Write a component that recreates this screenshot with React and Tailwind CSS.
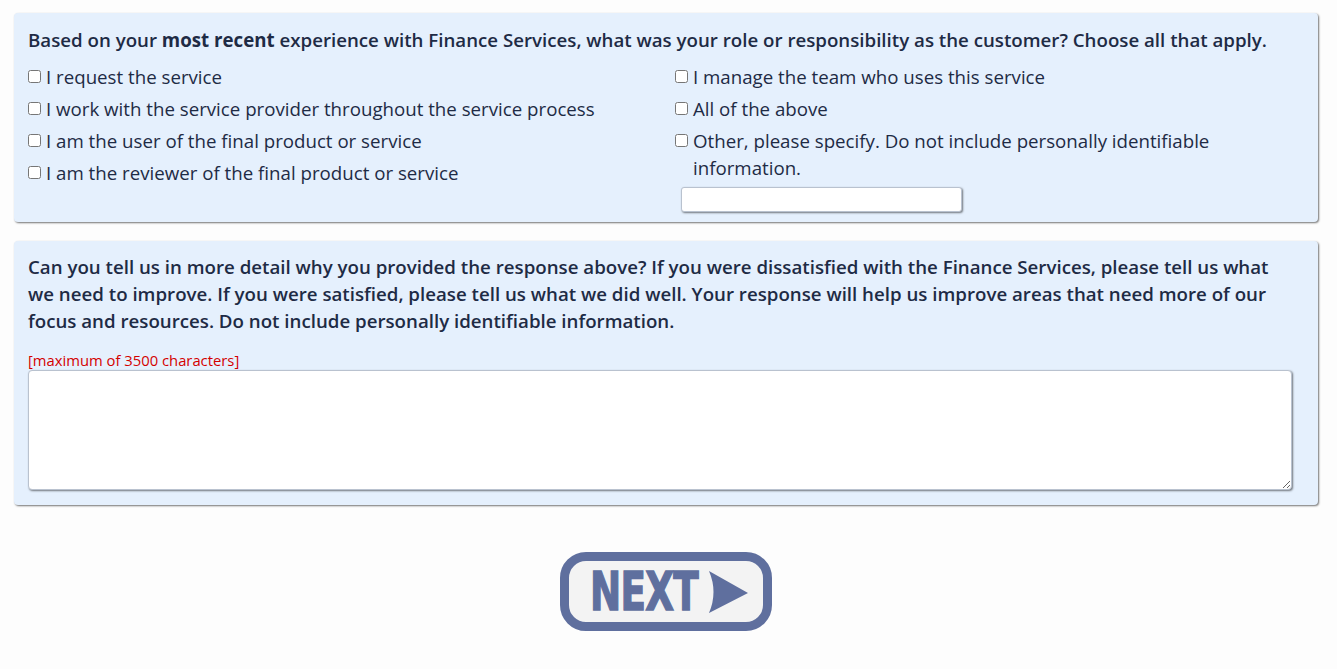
import { useState } from 'react';

const leftOptions = [
  'I request the service',
  'I work with the service provider throughout the service process',
  'I am the user of the final product or service',
  'I am the reviewer of the final product or service',
];

const rightOptions = [
  'I manage the team who uses this service',
  'All of the above',
  'Other, please specify. Do not include personally identifiable information.',
];

function Option({ label }) {
  return (
    <label className="flex items-start gap-[5px] leading-[27px]">
      <input type="checkbox" className="mt-[7px] h-[13px] w-[13px] shrink-0" />
      <span>{label}</span>
    </label>
  );
}

const App = () => {
  const [other, setOther] = useState('');
  const [detail, setDetail] = useState('');

  return (
    <div className="min-h-screen bg-[#fdfdfd] px-[14px] pt-[13px] text-[#1e2b45] font-['Open_Sans',sans-serif]">
      <div className="mr-[5px] rounded-[4px] bg-[#e5f0fd] px-[14px] pt-[14px] pb-[10px] shadow-[1px_1px_2px_rgba(0,0,0,0.55)]">
        <h2 className="text-[18.7px] font-semibold leading-[26px]">
          Based on your <span className="font-bold">most recent</span> experience with Finance Services, what was your role or responsibility as the customer? Choose all that apply.
        </h2>
        <div className="mt-[10px] grid grid-cols-[647px_1fr] text-[18.7px]">
          <div className="flex flex-col gap-[5px]">
            {leftOptions.map((o) => (
              <Option key={o} label={o} />
            ))}
          </div>
          <div className="flex flex-col gap-[5px] pr-[60px]">
            {rightOptions.map((o) => (
              <Option key={o} label={o} />
            ))}
            <input
              type="text"
              value={other}
              onChange={(e) => setOther(e.target.value)}
              className="ml-[6px] mt-[1px] h-[25px] w-[281px] rounded-[3px] border border-[#b9c2cf] bg-white shadow-[1px_1px_2px_rgba(0,0,0,0.5)]"
            />
          </div>
        </div>
      </div>

      <div className="mt-[19px] mr-[5px] rounded-[4px] bg-[#e5f0fd] px-[14px] pt-[12px] pb-[15px] shadow-[1px_1px_2px_rgba(0,0,0,0.55)]">
        <h2 className="pr-[24px] text-[18.7px] font-semibold leading-[27px]">
          Can you tell us in more detail why you provided the response above? If you were dissatisfied with the Finance Services, please tell us what we need to improve. If you were satisfied, please tell us what we did well. Your response will help us improve areas that need more of our focus and resources. Do not include personally identifiable information.
        </h2>
        <div className="mt-[17px] text-[14.8px] leading-[18px] text-[#d40000]">[maximum of 3500 characters]</div>
        <textarea
          value={detail}
          onChange={(e) => setDetail(e.target.value)}
          className="mt-[1px] block h-[120px] w-[1264px] rounded-[4px] border border-[#b9c2cf] bg-white shadow-[1px_1px_2px_rgba(0,0,0,0.5)]"
        />
      </div>

      <div className="flex justify-center pt-[47px] pr-[5px]">
        <button className="flex h-[79px] w-[212px] items-center rounded-[26px] border-[9px] border-[#5f6f9e] bg-[#f3f3f3] pl-[21px]">
          <span className="inline-block w-[107px] overflow-visible whitespace-nowrap">
            <span className="inline-block origin-left scale-x-[0.69] font-['DejaVu_Sans',sans-serif] text-[54px] font-bold leading-none tracking-[-1px] text-[#5f6f9e] [-webkit-text-stroke:1.5px_#5f6f9e]">
              NEXT
            </span>
          </span>
          <svg width="42" height="44" viewBox="0 0 42 44" className="ml-[10px]">
            <path d="M2 1 L41 23 L2 43 Q11 22 2 1 Z" fill="#5f6f9e" />
          </svg>
        </button>
      </div>
    </div>
  );
};

export default App;
